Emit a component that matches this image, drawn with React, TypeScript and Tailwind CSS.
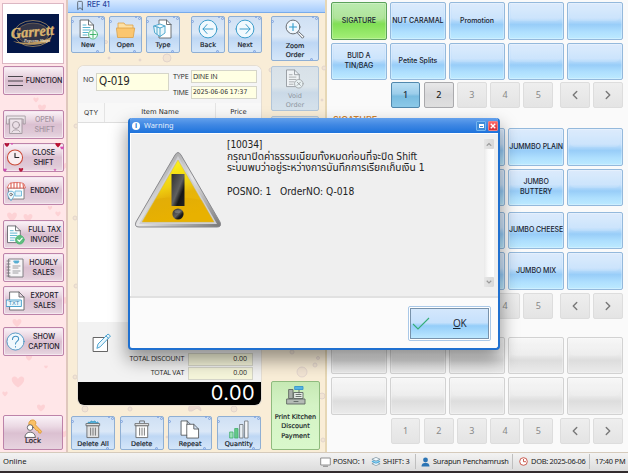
import React from "react";
import { ChevronLeft, ChevronRight, Bookmark } from "lucide-react";

type Kids = { children?: React.ReactNode };

const Heart = ({ x, y, s = 1, c = "#fdd2d5" }: { x: number; y: number; s?: number; c?: string }) => (
  <path transform={`translate(${x} ${y}) scale(${s})`} d="M0 4C-6 0-5-4-2.500-4-1-4 0-2.500 0-2 0-2.500 1-4 2.500-4 5-4 6 0 0 4Z" fill={c} />
);

/* ---------- line icons ---------- */

const svgBase = { fill: "none", strokeLinecap: "round" as const, strokeLinejoin: "round" as const };

const DocIcon = ({ badge }: { badge: "plus" | "x" | "check" }) => (
  <svg {...svgBase} viewBox="0 0 20 21" className="h-full w-full" stroke="#606468" strokeWidth="0.9">
    <path d="M1.500 1h8l5 5v12.500h-13Z" fill="#fff" />
    <path d="M9.500 1v5h5" />
    <path d="M4 6h3M4 8.500h7M4 11h7M4 13.500h5M4 16h4" stroke={badge === "x" ? "#888" : "#58b4cf"} strokeWidth="1" />
    <circle cx="14" cy="15.500" r="4.500" fill={badge === "check" ? "#5fbd80" : "#f2fbfa"} stroke={badge === "x" ? "#777" : "#45b86f"} />
    {badge === "plus" && <path d="M14 12.500v6M11 15.500h6" stroke="#32ad5e" />}
    {badge === "x" && <path d="m12.300 13.800 3.400 3.400m0-3.400-3.400 3.400" stroke="#666" />}
    {badge === "check" && <path d="m11.800 15.500 1.700 1.700 3-3.400" stroke="#fff" strokeWidth="1.200" />}
  </svg>
);

const FolderIcon = () => (
  <svg {...svgBase} viewBox="0 0 20 18" className="h-full w-full" stroke="#dda145" strokeWidth="0.8">
    <path d="M2 16V2h6l1.500 2H17v3" fill="#fde0a4" />
    <path d="M.7 7h18l-1.500 9.500H2Z" fill="#fbc66f" />
  </svg>
);

const TypeIcon = () => (
  <svg {...svgBase} viewBox="0 0 20 20" className="h-full w-full" stroke="#606468" strokeWidth="0.9">
    <path d="M6 5V1h7.500L18 5.500V19H6v-2" fill="#fff" />
    <path d="M13.500 1v4.500H18" />
    <path d="m1 7 6-2 5 2v7l-5 3.500-5-3.500Zm0 0 6 2 5-2M7 9v8.500M4 8v7" stroke="#43a2ca" fill="#e7f6fb" />
  </svg>
);

const ArrowIcon = ({ flip = false }: { flip?: boolean }) => (
  <svg {...svgBase} viewBox="0 0 20 20" className={flip ? "h-full w-full rotate-180" : "h-full w-full"} stroke="#3d9dcb" strokeWidth="1">
    <circle cx="10" cy="10" r="8.900" fill="#f1f9fe" />
    <path d="M15 10H5m4-4.500L5 10l4 4.500" />
  </svg>
);

const ZoomIcon = () => (
  <svg {...svgBase} viewBox="0 0 20 20" className="h-full w-full" stroke="#5b6065" strokeWidth="0.9">
    <circle cx="8" cy="8" r="6.900" fill="#f0f8fe" />
    <path d="M8 4.500v7M4.500 8h7" stroke="#2f9ccb" strokeWidth="1.100" />
    <path d="m12.700 13.700 1-1 5.300 5-1.300 1.300Z" fill="#fff" />
  </svg>
);

const TrashIcon = ({ full = false }: { full?: boolean }) => (
  <svg {...svgBase} viewBox="0 0 18 20" className="h-full w-full" stroke="#656565" strokeWidth="0.9">
    {full ? (
      <path d="m3 4 1.500-2L6 3l1-2 2 1 2-1 1.500 2L14 2l1 2Z" fill="#53b2dc" stroke="#2e94c2" />
    ) : (
      <path d="M6.500 3V1h5v2" />
    )}
    <path d="M3 6h12v12.500H3Z" fill={full ? "#e2e2e2" : "#fff"} />
    <path d="M2 3.800h14V6H2Z" fill="#eee" />
    <path d="M6.500 8.500V16M9 8.500V16M11.500 8.500V16" />
  </svg>
);

const CopyIcon = () => (
  <svg {...svgBase} viewBox="0 0 20 20" className="h-full w-full" stroke="#55585b" strokeWidth="0.9">
    <path d="M1 1h6l4 4v11H1ZM7 1v4h4" fill="#fff" />
    <path d="M7 4.500h7l5 5V19H7ZM14 4.500v5h5" fill="#fff" />
  </svg>
);

const BarsIcon = () => (
  <svg {...svgBase} viewBox="0 0 20 19" className="h-full w-full" stroke="#6c7175" strokeWidth="0.8">
    <path d="M1 12h3v6H1Z" fill="#9be1b5" stroke="#43b069" />
    <path d="M6 8.500h3V18H6Z" fill="#64c889" stroke="#43b069" />
    <path d="M11 4.500h3V18h-3Z" fill="#e8eff4" />
    <path d="M16 1h3v17h-3Z" fill="#f6f8fa" />
  </svg>
);

const RegisterIcon = () => (
  <svg {...svgBase} viewBox="0 0 20 20" className="h-full w-full" stroke="#5d6762" strokeWidth="0.9">
    <path d="M13 4.500V8M8 7.500h9v6H8Z" fill="#e6eee7" />
    <path d="M9 1.500h8v3H9Z" fill="#56b3e2" stroke="#3595cc" />
    <path d="M3 4.500h4v9H3Z" fill="#a7aea8" />
    <path d="M1 14h18v5H1Z" fill="#b4bbb5" />
    <path d="M10 9.500h5M10 11.500h5M8 16.500h4" />
  </svg>
);

const OpenShiftIcon = () => (
  <svg {...svgBase} viewBox="0 0 20 20" className="h-full w-full" stroke="#777577" strokeWidth="0.9">
    <path d="M.8 1h18.400v8h-2V4H3v5H.8Z" fill="#eee" />
    <path d="M4 4h12v14.500H4Z" fill="#f5f3f4" />
    <circle cx="10" cy="10" r="3.500" />
    <path d="M6 17c1-3 7-3 8 0" />
  </svg>
);

const ClockIcon = () => (
  <svg {...svgBase} viewBox="0 0 18 18" className="h-full w-full" stroke="#ca4b39" strokeWidth="1.100">
    <circle cx="9" cy="9" r="8" fill="#f9edf0" />
    <path d="M9 4.500V9h4" stroke="#28272b" strokeWidth="1.200" />
  </svg>
);

const StoreIcon = () => (
  <svg {...svgBase} viewBox="0 0 20 20" className="h-full w-full" stroke="#6a6a6a" strokeWidth="0.8">
    <path d="M3 7h15v11H3Z" fill="#fff" />
    <path d="M3 3c0-2 14-2 15 0l1.500 4H1.500Z" fill="#fff" stroke="#da5c50" />
    <path d="M5 2v5M8 1.500v5.500M11 1.500v5.500M14 2v5M17 3l.5 4" stroke="#da5c50" strokeWidth="1.100" />
    <path d="M9.500 10h6v5h-6Z" stroke="#5baed3" fill="#e6f4fb" />
    <path d="M5 19.200c-5-5-4-9 0-9s5 4 0 9Z" fill="#f5fbff" stroke="#4aa3cc" />
    <circle cx="5" cy="13.500" r="1.300" />
  </svg>
);

const NotebookIcon = () => (
  <svg {...svgBase} viewBox="0 0 18 20" className="h-full w-full" stroke="#77777b" strokeWidth="0.9">
    <path d="M3 1h14v18H3Z" fill="#f7f5f7" />
    <path d="M1 3h3M1 6h3M1 9h3M1 12h3M1 15h3M1 18h3" />
    <path d="M8 3h5l-1 2H9Z" fill="#55add1" stroke="#55add1" />
    <path d="M7 8h7M7 10h5M7 13h7M7 15h5" stroke="#bdbcc0" strokeWidth="1.300" />
  </svg>
);

const TxtIcon = () => (
  <svg {...svgBase} viewBox="0 0 20 20" className="h-full w-full" stroke="#626468" strokeWidth="0.9">
    <path d="M4 1h9l5 5v13H4ZM13 1v5h5" fill="#fff" />
    <rect x=".6" y="9" width="14.800" height="6.500" fill="#e9f6fc" stroke="#3e9cc9" />
    <text x="2.400" y="14.300" fontFamily="Liberation Sans" fontSize="5.800" fill="#3486b1" stroke="none">TXT</text>
  </svg>
);

const HelpIcon = () => (
  <svg {...svgBase} viewBox="0 0 20 20" className="h-full w-full" stroke="#418fc0" strokeWidth="0.9">
    <circle cx="10" cy="10" r="9" fill="#f0f8fd" />
    <path d="M6.800 8c0-5 7-4.500 6.500-.5-.3 2.500-3.300 2.500-3.300 5.200M10 15.200v.6" strokeWidth="1.100" />
  </svg>
);

const LockIcon = () => (
  <svg {...svgBase} viewBox="0 0 20 20" className="h-full w-full" stroke="#525257" strokeWidth="0.9">
    <path d="M7 2c2-2 6-1 6 2 0 1 0 1.500-.6 2l6.600 7-1 2-2-.5-.5-2-2-.5-3.500-4C5 8 4.500 4 7 2Z" fill="#f9c065" stroke="#db962f" />
    <circle cx="7" cy="9" r="3" fill="#fff" />
    <path d="M1.500 19c0-7 11-7 11 0Z" fill="#fff" />
  </svg>
);

/* ---------- left column ---------- */

const SideButton = ({ icon, lines, faded = false, hearts = false, mt, iconBox = "h-5 w-5" }: {
  icon: React.ReactNode; lines: string[]; faded?: boolean; hearts?: boolean; mt: string; iconBox?: string;
}) => (
  <div className={`${mt} relative flex h-[29px] w-[61px] shrink-0 items-center rounded-[2px] border border-[#bd83a9] bg-[linear-gradient(#fbf3f8_0%,#ead8e3_30%,#dbc0d1_50%,#dfc9d7_80%,#e9d8e2_100%)] pl-[2px] shadow-[inset_0_0_0_1px_#f5e7ef]`}>
    <div className={`shrink-0 ${iconBox} ${faded ? "opacity-60" : ""}`}>{icon}</div>
    <div className={`flex-1 text-center font-['Inter',sans-serif] text-[7.100px] leading-[10px] font-medium tracking-[-0.100px] whitespace-nowrap ${faded ? "text-[#a393a0]" : "text-[#24202b]"}`}>
      {lines.map((l) => <div key={l}>{l}</div>)}
    </div>
    {hearts && (
      <svg viewBox="0 0 61 29" className="absolute -inset-px h-[29px] w-[61px]">
        <Heart x={4} y={2} s={0.5} c="#b31335" /><Heart x={9} y={1} s={0.25} c="#d74fb1" />
        <Heart x={55} y={2} s={0.6} c="#ba1030" /><Heart x={59} y={5} s={0.4} c="#da4eb4" />
        <Heart x={2} y={27} s={0.4} c="#ce4bb0" /><Heart x={18} y={27} s={0.5} c="#b91c3d" />
        <Heart x={52} y={27} s={0.3} c="#dc6ebb" />
      </svg>
    )}
  </div>
);

const heartsBg: [number, number, number][] = [
  [42, 108, 0.9], [12, 217, 1.1], [28, 218, 1], [58, 214, 0.6], [17, 241, 0.8], [17, 323, 1], [29, 358, 0.7],
  [46, 367, 0.4], [18, 382, 1.4], [41, 408, 0.9], [5, 394, 0.6], [65, 300, 1], [64, 166, 0.8], [36, 100, 0.6], [64, 434, 0.9], [50, 208, 0.5],
];

const Sidebar = () => (
  <aside className="relative flex h-[452px] w-[66px] shrink-0 flex-col bg-[#ffe6e8] pl-[3px]">
    <svg viewBox="0 0 66 452" className="absolute inset-0 h-[452px] w-[66px]">
      {heartsBg.map(([x, y, s], i) => <Heart key={i} x={x} y={y} s={s} />)}
    </svg>
    <div className="relative -ml-px mt-[3px] flex h-[61px] w-[62px] shrink-0 items-center justify-center border border-[#dcb7c3] bg-white">
      <svg viewBox="0 0 52 39" className="h-[39px] w-[52px]">
        <rect width="52" height="39" fill="#041747" />
        <ellipse cx="26" cy="19.500" rx="19" ry="13" fill="none" stroke="#bc9c66" strokeWidth=".7" />
        <ellipse cx="26" cy="19.500" rx="16" ry="10.500" fill="#6d5c46" fillOpacity=".45" stroke="#a98d62" strokeWidth=".5" />
        <path d="M6 27c9 3 28 2 38-4l-1 4c-9 5-28 5-37 0Z" fill="#bb985e" />
        <text x="4" y="22.500" transform="rotate(-5 26 20)" fontFamily="Liberation Serif" fontSize="15" fontWeight="bold" fontStyle="italic" fill="#d9b36e" stroke="#d9b36e" strokeWidth=".35" textLength="43" lengthAdjust="spacingAndGlyphs">Garrett</text>
        <text x="17" y="27.500" fontFamily="Liberation Serif" fontSize="4.200" fontStyle="italic" fontWeight="bold" fill="#eee0c6">Popcorn Shops</text>
      </svg>
    </div>
    <SideButton mt="mt-[2px]" iconBox="h-4 w-[18px] ml-px" lines={["FUNCTION"]} icon={
      <svg viewBox="0 0 18 16" className="h-full w-full" stroke="#39353c" strokeWidth="0.900"><path d="M1 3.500h15M1 8h15M1 12.500h15" /></svg>
    } />
    <SideButton mt="mt-[15px]" faded lines={["OPEN", "SHIFT"]} icon={<OpenShiftIcon />} />
    <SideButton mt="mt-[4px]" hearts iconBox="h-[17px] w-[18px]" lines={["CLOSE", "SHIFT"]} icon={<ClockIcon />} />
    <SideButton mt="mt-[4px]" lines={["ENDDAY"]} icon={<StoreIcon />} />
    <SideButton mt="mt-[15px]" lines={["FULL TAX", "INVOICE"]} icon={<DocIcon badge="check" />} />
    <SideButton mt="mt-[4px]" iconBox="h-5 w-[18px]" lines={["HOURLY", "SALES"]} icon={<NotebookIcon />} />
    <SideButton mt="mt-[4px]" lines={["EXPORT", "SALES"]} icon={<TxtIcon />} />
    <SideButton mt="mt-[12px]" iconBox="h-[19px] w-[19px]" lines={["SHOW", "CAPTION"]} icon={<HelpIcon />} />
    <div className="relative mt-[59px] flex h-[35px] w-[60px] shrink-0 flex-col items-center rounded-[2px] border border-[#bd83a9] bg-[linear-gradient(#fbf3f8_0%,#ead8e3_32%,#dbc0d1_52%,#e7d3df_100%)] pt-[3px]">
      <div className="h-[19px] w-5"><LockIcon /></div>
      <span className="-mt-px font-['DejaVu_Sans',sans-serif] text-[7px] leading-[9px] text-[#161219] [-webkit-text-stroke:0.150px_#161219]">Lock</span>
    </div>
  </aside>
);

/* ---------- order panel ---------- */

const ToolButton = ({ icon, lines, box, iconBox = "h-5 w-5", faded = false, green = false }: {
  icon: React.ReactNode; lines: string[]; box: string; iconBox?: string; faded?: boolean; green?: boolean;
}) => (
  <div className={`relative flex shrink-0 flex-col items-center rounded-[2px] border ${box} ${green ? "border-[#8fbb7e] bg-[linear-gradient(#c6e9b4,#d4f3c5_35%,#d9f8cb)]" : faded ? "border-[#b3c6d9] bg-[linear-gradient(#d8e1e8_0%,#dce5eb_45%,#cad9e7_60%,#d6e2ec_100%)]" : "border-[#8fafd4] bg-[linear-gradient(#cfe0f4_0%,#dbe8f7_45%,#bed7f4_60%,#d4e6f9_100%)]"}`}>
    <div className={`shrink-0 ${iconBox} ${faded ? "opacity-60" : ""}`}>{icon}</div>
    <div className={`text-center font-['DejaVu_Sans',sans-serif] text-[6.500px] whitespace-nowrap ${faded ? "text-[#8e969f]" : "text-[#10151c] [-webkit-text-stroke:0.150px_#10151c]"} ${green || lines.length > 1 ? "mt-[3px] leading-[9.300px]" : "mt-px leading-[8px]"}`}>
      {lines.map((l) => <div key={l}>{l}</div>)}
    </div>
    {!green && !faded && (
      <>
        <i className="absolute top-[3px] -left-px size-[3px] rounded-full border border-[#80a4df]" />
        <i className="absolute -top-px right-[4px] size-[2px] rounded-full bg-[#80a4df]" />
        <i className="absolute top-0 right-0 size-[3px] rounded-full border border-[#80a4df]" />
        <i className="absolute right-[5px] -bottom-px size-[3px] rounded-full border border-[#80a4df] bg-[#b8d0f5]" />
      </>
    )}
  </div>
);

const Field = ({ children, cls }: Kids & { cls: string }) => (
  <div className={`flex shrink-0 items-center border border-[#d5d5c9] whitespace-nowrap text-[#292929] ${cls}`}>{children}</div>
);

const OrderPanel = () => (
  <section className="flex h-[339px] w-[183px] flex-col overflow-hidden rounded-[6px] bg-white font-['Open_Sans',sans-serif] shadow-[0_0_0_1px_#e5ded3]">
    <div className="flex h-[37px] shrink-0 bg-[#f5f5f6] pt-[4px] pl-[5px] text-[7.200px] text-[#292929]">
      <span className="mt-[4px] w-[13px] leading-[10px] tracking-[-0.200px]">NO</span>
      <Field cls="mt-[3px] h-[18px] w-[73px] bg-[#ffffe3] pl-[2px] font-['DejaVu_Sans_Condensed','DejaVu_Sans',sans-serif] text-[11.500px] tracking-[-0.250px]">Q-019</Field>
      <div className="ml-[4px] flex flex-col gap-[3px]">
        <div className="flex h-[13px] items-center"><span className="w-[18px] tracking-[-0.200px]">TYPE</span><Field cls="h-[13px] w-[66px] bg-[#ffffe3] pl-px text-[7.200px] tracking-[-0.200px]">DINE IN</Field></div>
        <div className="flex h-[13px] items-center"><span className="w-[18px] tracking-[-0.200px]">TIME</span><Field cls="h-[13px] w-[66px] bg-[#ffffe3] pl-px font-['DejaVu_Sans_Condensed',sans-serif] text-[6.700px]">2025-06-06 17:37</Field></div>
      </div>
    </div>
    <div className="grid h-[20px] shrink-0 grid-cols-[27px_111px_45px] border-b border-[#dedede] bg-[#f8f8f8] text-center font-['DejaVu_Sans',sans-serif] text-[6.800px] leading-[19px] text-[#2b2b2b]">
      <span className="border-r border-[#e4e4e4] font-['Inter']">QTY</span>
      <span className="border-r border-[#e4e4e4]">Item Name</span>
      <span>Price</span>
    </div>
    <div className="flex-1 bg-white" />
    <div className="flex h-[60px] shrink-0 justify-between bg-[#f2f2f2] pr-[8px] pl-[14px]">
      <svg {...svgBase} viewBox="0 0 19 20" className="mt-[11px] h-[20px] w-[19px]" stroke="#555" strokeWidth="0.9">
        <path d="M1.500 4.500h14v14h-14Z" fill="#fff" />
        <path d="m5 15 1-4L16 1l2.500 2L8.500 13.500ZM14 3l2.500 2.300" fill="#eaf7fd" stroke="#3f9ccd" />
      </svg>
      <div className="flex flex-col justify-end gap-px pb-[2px] text-right text-[7px] tracking-[-0.250px] text-[#282828]">
        <div className="flex h-[13px] items-center justify-end gap-[4px]">TOTAL DISCOUNT<Field cls="h-[13px] w-[65px] justify-end bg-[#f5f5da] pr-[5px] tracking-normal">0.00</Field></div>
        <div className="flex h-[13px] items-center justify-end gap-[4px]">TOTAL VAT<Field cls="h-[13px] w-[65px] justify-end bg-[#f5f5da] pr-[5px] tracking-normal">0.00</Field></div>
      </div>
    </div>
    <div className="flex h-[23px] shrink-0 items-center justify-end bg-black pr-[6px] pb-px font-['Inter',sans-serif] text-[20px] leading-none tracking-[0.400px] text-white">0.00</div>
  </section>
);

const dots: [number, number, number][] = [
  [99, 58, 4], [41, 58, 1], [38, 42, 1.5], [72, 60, 1], [192, 42, 1.5], [125, 26, 1.3], [203, 70, 2], [256, 68, 2], [254, 100, 1],
  [8, 126, 2], [7, 218, 2], [8, 286, 2], [7, 377, 2], [17, 409, 3], [62, 409, 2], [166, 409, 3], [100, 404, 1.5], [234, 372, 5], [247, 365, 2], [254, 396, 3], [224, 352, 2], [196, 333, 1.5], [205, 385, 1], [255, 440, 2], [250, 358, 1.5], [99, 437, 1],
];

const OrderArea = () => (
  <main className="relative flex h-[452px] w-[261px] shrink-0 flex-col border-x-2 border-r-[#e6d7b5] border-l-[#dfc7bd] bg-[#f9edd7]">
    <svg viewBox="0 0 258 452" className="absolute inset-0 h-[452px] w-[258px]" fill="#f2e4d3" stroke="#ddcfca" strokeWidth="0.8">
      {dots.map(([x, y, r], i) => <circle key={i} cx={x} cy={y} r={r} />)}
      <path d="M121 411c-3-9 12-9 12 0l-4-3-5 3Z" fill="#ecd8cd" />
    </svg>
    <header className="relative flex h-[13px] shrink-0 items-center border-b border-[#78abeb] bg-[linear-gradient(#d7e9ff,#a7cdfd)] pb-px pl-[8px] font-['Inter',sans-serif] text-[7.200px] font-medium text-[#27449e]">
      <Bookmark className="mr-[3px] h-[11px] w-[8px]" color="#47505b" strokeWidth={2} preserveAspectRatio="none" />REF 41
    </header>
    <div className="relative flex flex-1 pt-[3px] pl-px">
      <div className="w-[202px] shrink-0 pl-[2px]">
        <div className="flex">
          <ToolButton box="h-[37px] w-[34px] pt-[2px]" icon={<DocIcon badge="plus" />} lines={["New"]} iconBox="h-[21px] w-[20px] ml-[2px]" />
          <ToolButton box="ml-[4px] h-[37px] w-[33px] pt-[4px]" icon={<FolderIcon />} lines={["Open"]} iconBox="h-[18px] w-[20px] mb-px" />
          <ToolButton box="ml-[4px] h-[37px] w-[34px] pt-[2px]" icon={<TypeIcon />} lines={["Type"]} iconBox="h-5 w-5 mb-px" />
          <ToolButton box="ml-[11px] h-[37px] w-[34px] pt-[2px]" icon={<ArrowIcon />} lines={["Back"]} iconBox="h-5 w-5 mb-px" />
          <ToolButton box="ml-[3px] h-[37px] w-[34px] pt-[2px]" icon={<ArrowIcon flip />} lines={["Next"]} iconBox="h-5 w-5 mb-px" />
        </div>
        <div className="mt-[13px] ml-[7px]"><OrderPanel /></div>
        <div className="mt-[11px] flex gap-[4.600px]">
          <ToolButton box="h-[34px] w-[44px] pt-[3px]" icon={<TrashIcon full />} lines={["Delete All"]} iconBox="h-[19px] w-[18px]" />
          <ToolButton box="h-[34px] w-[44px] pt-[3px]" icon={<TrashIcon />} lines={["Delete"]} iconBox="h-[19px] w-[18px]" />
          <ToolButton box="h-[34px] w-[44px] pt-[3px]" icon={<CopyIcon />} lines={["Repeat"]} iconBox="h-[19px] w-[20px]" />
          <ToolButton box="h-[34px] w-[44px] pt-[3px]" icon={<BarsIcon />} lines={["Quantity"]} iconBox="h-[19px] w-[20px]" />
        </div>
      </div>
      <div className="flex flex-col">
        <ToolButton box="h-[45px] w-[48px] pt-[2px]" icon={<ZoomIcon />} lines={["Zoom", "Order"]} iconBox="h-5 w-5" />
        <ToolButton faded box="mt-[5px] h-[45px] w-[48px] pt-[2px]" icon={<DocIcon badge="x" />} lines={["Void", "Order"]} iconBox="h-5 w-5" />
        <ToolButton faded box="mt-[5px] h-[45px] w-[48px]" icon={null} lines={[]} />
        <ToolButton green box="mt-[220px] h-[69px] w-[49px] pt-[3px]" icon={<RegisterIcon />} lines={["Print Kitchen", "Discount", "Payment"]} iconBox="h-5 w-5 mb-[5px]" />
      </div>
    </div>
  </main>
);

/* ---------- product grid ---------- */

const tones = {
  blue: "border-[#94b9dc] bg-[linear-gradient(#d9e9fc_0%,#c6e1fc_42%,#98cdf8_60%,#aedffe_80%,#bdeaff_100%)]",
  green: "border-[#5ba15a] bg-[linear-gradient(#b4e8a7_0%,#a6e18f_42%,#81df56_58%,#a4ef77_100%)]",
  grey: "border-[#d2d2d2] bg-[linear-gradient(#f6f6f6_0%,#ebebeb_48%,#dddddd_64%,#ebebeb_100%)]",
};

const Tile = ({ label = "", tone }: { label?: string; tone: keyof typeof tones }) => (
  <div className={`relative flex h-[37.500px] items-center justify-center overflow-hidden rounded-[2px] border text-center font-['Inter',sans-serif] text-[7px] leading-[10.500px] font-medium tracking-[-0.050px] whitespace-pre text-[#172230] shadow-[inset_0_0_0_1px_rgba(255,255,255,0.25)] ${tones[tone]}`}>
    <i className="absolute inset-x-[2px] top-0 h-[18px] rounded-b-[5px] bg-white/10" />
    <span className="relative">{label}</span>
  </div>
);

const TileGrid = ({ rows, tone, cls }: { rows: string[][]; tone: "blue" | "grey"; cls: string }) => (
  <div className={`grid w-[292px] shrink-0 grid-cols-5 gap-x-[3.400px] ${cls}`}>
    {rows.flat().map((l, i) => <Tile key={i} label={l} tone={l === "SIGATURE" ? "green" : tone} />)}
  </div>
);

const Pager = ({ active = 0, enabled = 0, cls }: { active?: number; enabled?: number; cls: string }) => {
  const off = "border-[#dddddd] bg-[linear-gradient(#eeeeee,#e4e4e4)] text-[#888]";
  return (
    <div className={`flex w-[292px] shrink-0 justify-end gap-[3.500px] font-['Noto_Sans',sans-serif] text-[9px] ${cls}`}>
      {[1, 2, 3, 4, 5].map((n) => (
        <div key={n} className={`flex h-[26px] w-[29.700px] items-center justify-center rounded-[2px] border ${n === active ? "border-[#5188ad] bg-[linear-gradient(#bbe0f5_0%,#9ccdea_45%,#79bce0_55%,#8cc9e8_100%)] font-medium text-[#1c2f3c]" : n === enabled ? "border-[#aaaaad] bg-[linear-gradient(#e8e8e9_0%,#d8d8da_50%,#dfdfdf_100%)] font-medium text-[#222]" : off}`}>{n}</div>
      ))}
      <div className={`ml-[3.500px] flex h-[26px] w-[29.700px] items-center justify-center rounded-[2px] border ${off}`}><ChevronLeft size={14} strokeWidth={2.4} color="#777" /></div>
      <div className={`flex h-[26px] w-[29.700px] items-center justify-center rounded-[2px] border ${off}`}><ChevronRight size={14} strokeWidth={2.4} color="#777" /></div>
    </div>
  );
};

const ProductArea = () => (
  <section className="flex h-[452px] flex-1 flex-col bg-[#fafafa] pl-[4px]">
    <TileGrid tone="blue" cls="mt-[2px] gap-y-[3px]" rows={[["SIGATURE", "NUT CARAMAL", "Promotion", "", ""], ["BUID A\nTIN/BAG", "Petite Splits", "", "", ""]]} />
    <Pager active={1} enabled={2} cls="mt-[2px]" />
    <h2 className="mt-[5px] h-[15px] shrink-0 pl-[2px] font-['Inter',sans-serif] text-[9px] leading-[13px] font-medium text-[#d0832e]">SIGATURE</h2>
    <TileGrid tone="blue" cls="gap-y-[3px]" rows={[["", "", "", "JUMMBO PLAIN", ""], ["", "", "", "JUMBO\nBUTTERY", ""]]} />
    <TileGrid tone="blue" cls="mt-[5.500px] gap-y-[3px]" rows={[["", "", "", "JUMBO CHEESE", ""], ["", "", "", "JUMBO MIX", ""]]} />
    <Pager cls="mt-[3px]" />
    <TileGrid tone="grey" cls="mt-[18px] gap-y-[3px]" rows={[["", "", "", "", ""], ["", "", "", "", ""]]} />
    <Pager cls="mt-[3px]" />
  </section>
);

/* ---------- warning dialog ---------- */

const WarningSign = () => (
  <svg viewBox="0 0 88 78" className="h-[78px] w-[88px]">
    <defs>
      <linearGradient id="rim" x1="0" y1="0" x2="1" y2="1"><stop stopColor="#777" /><stop offset=".5" stopColor="#e6e6e8" /><stop offset="1" stopColor="#777" /></linearGradient>
      <linearGradient id="yellow" x1="0" y1="0" x2=".3" y2="1"><stop stopColor="#ffff20" /><stop offset=".5" stopColor="#f0d010" /><stop offset=".65" stopColor="#e6b40a" /><stop offset="1" stopColor="#eeb800" /></linearGradient>
      <linearGradient id="mark" x1="0" y1="0" x2="1" y2="1"><stop stopColor="#303030" /><stop offset=".5" stopColor="#606060" /><stop offset=".7" stopColor="#171717" /><stop offset="1" stopColor="#222" /></linearGradient>
    </defs>
    <path d="M41 4q3-5 6 0l39 67q2 5-3 5H5q-5 0-3-5Z" fill="url(#rim)" stroke="#8a8a8e" strokeWidth="1" />
    <path d="M44 5 83 73H5Z" fill="#cfcfd3" />
    <path d="M44 9 80 71H8Z" fill="url(#yellow)" stroke="#d0b84a" strokeWidth=".5" />
    <path d="M22 48q24-4 46 1L80 71H9Z" fill="#d89a00" opacity=".25" />
    <path d="M37.500 23h13V55h-13Z" fill="url(#mark)" />
    <circle cx="44" cy="63" r="5.600" fill="url(#mark)" />
    <ellipse cx="43.500" cy="60.500" rx="3" ry="1.500" fill="#888" opacity=".6" />
  </svg>
);

const Dialog = () => (
  <div className="absolute top-[118px] left-[128px] flex h-[232px] w-[372px] flex-col rounded-[4px] border-2 border-t-0 border-[#1f70d0] bg-[#fbfbfb] shadow-[0_9px_18px_1px_rgba(0,0,0,0.4)]">
    <div className="flex h-[15px] shrink-0 items-center rounded-t-[2px] bg-[linear-gradient(#63a0ec_0%,#4088e3_45%,#1e73dc_100%)] pl-px font-['Noto_Sans',sans-serif] text-[7.400px] text-[#e2eefb]">
      <span className="mr-[4px] ml-px flex size-[8px] items-center justify-center rounded-full bg-white text-[7px] leading-none font-bold text-[#2774ce]">i</span>
      Warning
      <span className="ml-auto flex size-[10px] items-center justify-center rounded-[1px] border border-[#75b5ef] bg-[#3e8bd8]"><i className="h-[4px] w-[5px] border border-t-2 border-white" /></span>
      <span className="ml-[2px] flex size-[10px] items-center justify-center rounded-[1px] border border-[#f18282] bg-[linear-gradient(#f66,#d52e35)]">
        <svg viewBox="0 0 8 8" className="size-[6px]" stroke="#fff" strokeWidth="1.800"><path d="m1 1 6 6m0-6L1 7" /></svg>
      </span>
    </div>
    <div className="flex h-[165px] shrink-0 border-b-2 border-[#e1e1e1] bg-[#efefef] shadow-[inset_1px_1px_0_#fff]">
      <div className="mt-[18px] ml-[4px] h-[78px] w-[88px] shrink-0"><WarningSign /></div>
      <div className="mt-[6px] ml-[5px] h-[80px] flex-1 font-['DejaVu_Sans_Condensed','Noto_Sans_Thai','Noto_Sans',sans-serif] text-[10.200px] leading-[11.700px] whitespace-pre text-[#222]">
        <p className="tracking-[-0.150px]">[10034]</p>
        <p className="w-max">กรุณาปิดค่าธรรมเนียมทั้งหมดก่อนที่จะปิด Shift</p>
        <p className="w-max">ระบบพบว่าอยู่ระหว่างการบันทึกการเรียกเก็บเงิน 1</p>
        <p>&nbsp;</p>
        <p className="w-max">POSNO: 1   OrderNO: Q-018</p>
      </div>
      <div className="mt-[6px] mr-[4px] flex h-[148px] w-[10px] shrink-0 flex-col justify-between bg-[linear-gradient(90deg,#e9e9e9,#fafafa_40%,#fff)]">
        <i className="flex h-[10px] items-center justify-center rounded-[1px] bg-[linear-gradient(90deg,#e5e5e5,#d8d8d8)]">
          <svg viewBox="0 0 8 6" className="w-[6px]" fill="none" stroke="#999" strokeWidth="1.500"><path d="m1 5 3-3 3 3" /></svg>
        </i>
        <i className="flex h-[10px] items-center justify-center rounded-[1px] bg-[linear-gradient(90deg,#e5e5e5,#d8d8d8)]">
          <svg viewBox="0 0 8 6" className="w-[6px]" fill="none" stroke="#999" strokeWidth="1.500"><path d="m1 1 3 3 3-3" /></svg>
        </i>
      </div>
    </div>
    <div className="flex flex-1 justify-end pt-[8px] pr-[7px]">
      <div className="h-[35px] w-[83px] rounded-[2px] border border-[#a9c8e8] bg-white p-px">
        <div className="relative flex h-full items-center border border-[#7892ab] bg-[linear-gradient(#d4e7fc_0%,#c6e1fc_47%,#94cdf9_58%,#bce8ff_100%)] font-['Open_Sans',sans-serif] text-[10px] text-[#172432]">
          <svg viewBox="0 0 18 13" className="ml-px h-[13px] w-[18px]" fill="none" stroke="#35ad77" strokeWidth="1.100"><path d="m1 7 5 5L17 1" /></svg>
          <span className="ml-[23px] tracking-[-0.300px]"><u className="underline-offset-1">O</u>K</span>
        </div>
      </div>
    </div>
  </div>
);

/* ---------- status bar ---------- */

const StatusBar = () => (
  <footer className="flex h-[21px] items-center border-b-2 border-[#322b2d] bg-[linear-gradient(#f4f4f4,#dcdcdc)] font-['Noto_Sans',sans-serif] text-[7.400px] tracking-[-0.200px] whitespace-nowrap text-[#202020] shadow-[inset_0_1px_0_#d5cabb]">
    <span className="w-[320px] shrink-0 pl-[3px] text-[7.600px] tracking-normal">Online</span>
    <svg viewBox="0 0 11 10" className="mr-[2px] h-[10px] w-[11px] shrink-0" fill="#fff" stroke="#838383" strokeWidth=".9"><path d="M.7 1h9.600v7H.7ZM3 9.300h5" /></svg>
    <span className="w-[38px] shrink-0">POSNO: 1</span>
    <svg viewBox="0 0 11 11" className="mr-[2px] h-[11px] w-[10px] shrink-0" fill="#f3fbff" stroke="#6c8594" strokeWidth=".7"><path d="m1 8 4.500-2L10 8l-4.500 2Z" /><path d="m1 5.500 4.500-2 4.500 2-4.500 2Z" stroke="#2595d1" fill="#8ed3f4" /><path d="m1 3 4.500-2L10 3 5.500 5Z" /></svg>
    <span className="w-[32px] shrink-0">SHIFT: 3</span>
    <i className="h-[15px] w-px shrink-0 bg-[#bfbfbf]" />
    <svg viewBox="0 0 9 10" className="mr-[3px] ml-[5px] h-[10px] w-[9px] shrink-0" fill="#2b74b4"><circle cx="4.500" cy="3" r="2.400" /><path d="M.5 9.500C.5 7 2 6 3.500 6h2C7 6 8.500 7 8.500 9.500Z" /></svg>
    <span className="w-[79px] shrink-0">Surapun Penchamrush</span>
    <i className="h-[15px] w-px shrink-0 bg-[#bfbfbf]" />
    <svg viewBox="0 0 9 9" className="mr-[3px] ml-[6px] size-[9px] shrink-0" fill="#fff" stroke="#c64c40" strokeWidth=".9"><circle cx="4.500" cy="4.500" r="3.800" /><path d="M4.500 2v2.700H7" /></svg>
    <span className="w-[58px] shrink-0 tracking-[-0.270px]">DOB: 2025-06-06</span>
    <i className="h-[15px] w-px shrink-0 bg-[#bfbfbf]" />
    <span className="ml-[5px]">17:40 PM</span>
  </footer>
);

export default function App() {
  return (
    <div className="relative h-[473px] w-[628px] overflow-hidden bg-[#fafafa]">
      <div className="flex h-[452px]">
        <Sidebar />
        <OrderArea />
        <ProductArea />
      </div>
      <StatusBar />
      <Dialog />
    </div>
  );
}
